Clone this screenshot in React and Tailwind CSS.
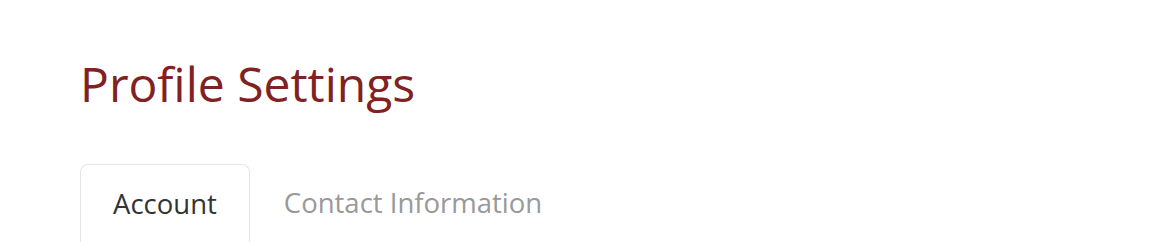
export default function App() {
  return (
    <div className="min-h-screen bg-white pl-20 pt-[48px]" style={{ fontFamily: '"Open Sans", sans-serif' }}>
      <h1 className="text-[48px] leading-[72px] text-[#812222] font-normal">Profile Settings</h1>
      <div className="mt-[44px] flex border-b border-[#e5e5e5]">
        <div className="h-[100px] rounded-t-[8px] border border-b-0 border-[#e5e5e5] px-[32px] pt-[19px] text-[27.5px] leading-[40px] text-[#333]">
          Account
        </div>
        <div className="px-[34px] pt-[19px] text-[27.5px] leading-[40px] text-[#999]">Contact Information</div>
      </div>
    </div>
  );
}
